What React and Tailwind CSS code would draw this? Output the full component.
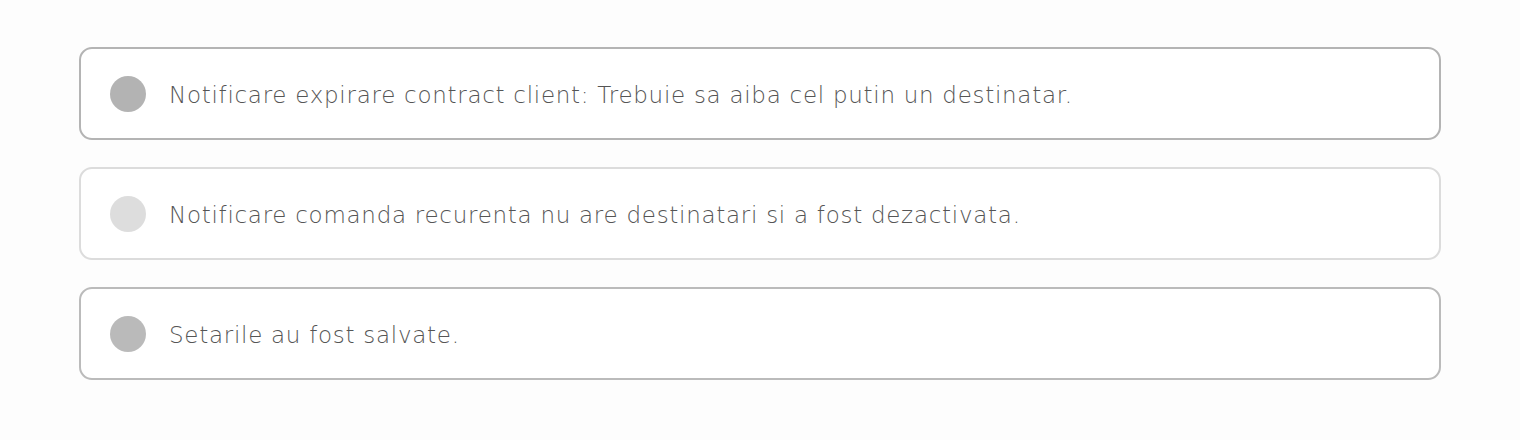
const messages = [
  {
    text: "Notificare expirare contract client: Trebuie sa aiba cel putin un destinatar.",
    border: "border-[#b4b4b4]",
    dot: "bg-[#b3b3b3]",
  },
  {
    text: "Notificare comanda recurenta nu are destinatari si a fost dezactivata.",
    border: "border-[#dcdcdc]",
    dot: "bg-[#dddddd]",
  },
  {
    text: "Setarile au fost salvate.",
    border: "border-[#bbbbbb]",
    dot: "bg-[#bababa]",
  },
];

export default function App() {
  return (
    <div className="min-h-[440px] w-full bg-[#fdfdfd] px-[79px] pt-[47px] font-['DejaVu_Sans',sans-serif]">
      <div className="flex flex-col gap-[27px]">
        {messages.map((m, i) => (
          <div
            key={i}
            className={`flex h-[93px] items-center rounded-[13px] border-2 bg-white pl-[29px] ${m.border}`}
          >
            <span className={`size-[36px] shrink-0 rounded-full ${m.dot}`}></span>
            <p className="ml-[23px] pt-[4px] text-[23px] font-extralight tracking-[0.72px] text-[#555555]">{m.text}</p>
          </div>
        ))}
      </div>
    </div>
  );
}
